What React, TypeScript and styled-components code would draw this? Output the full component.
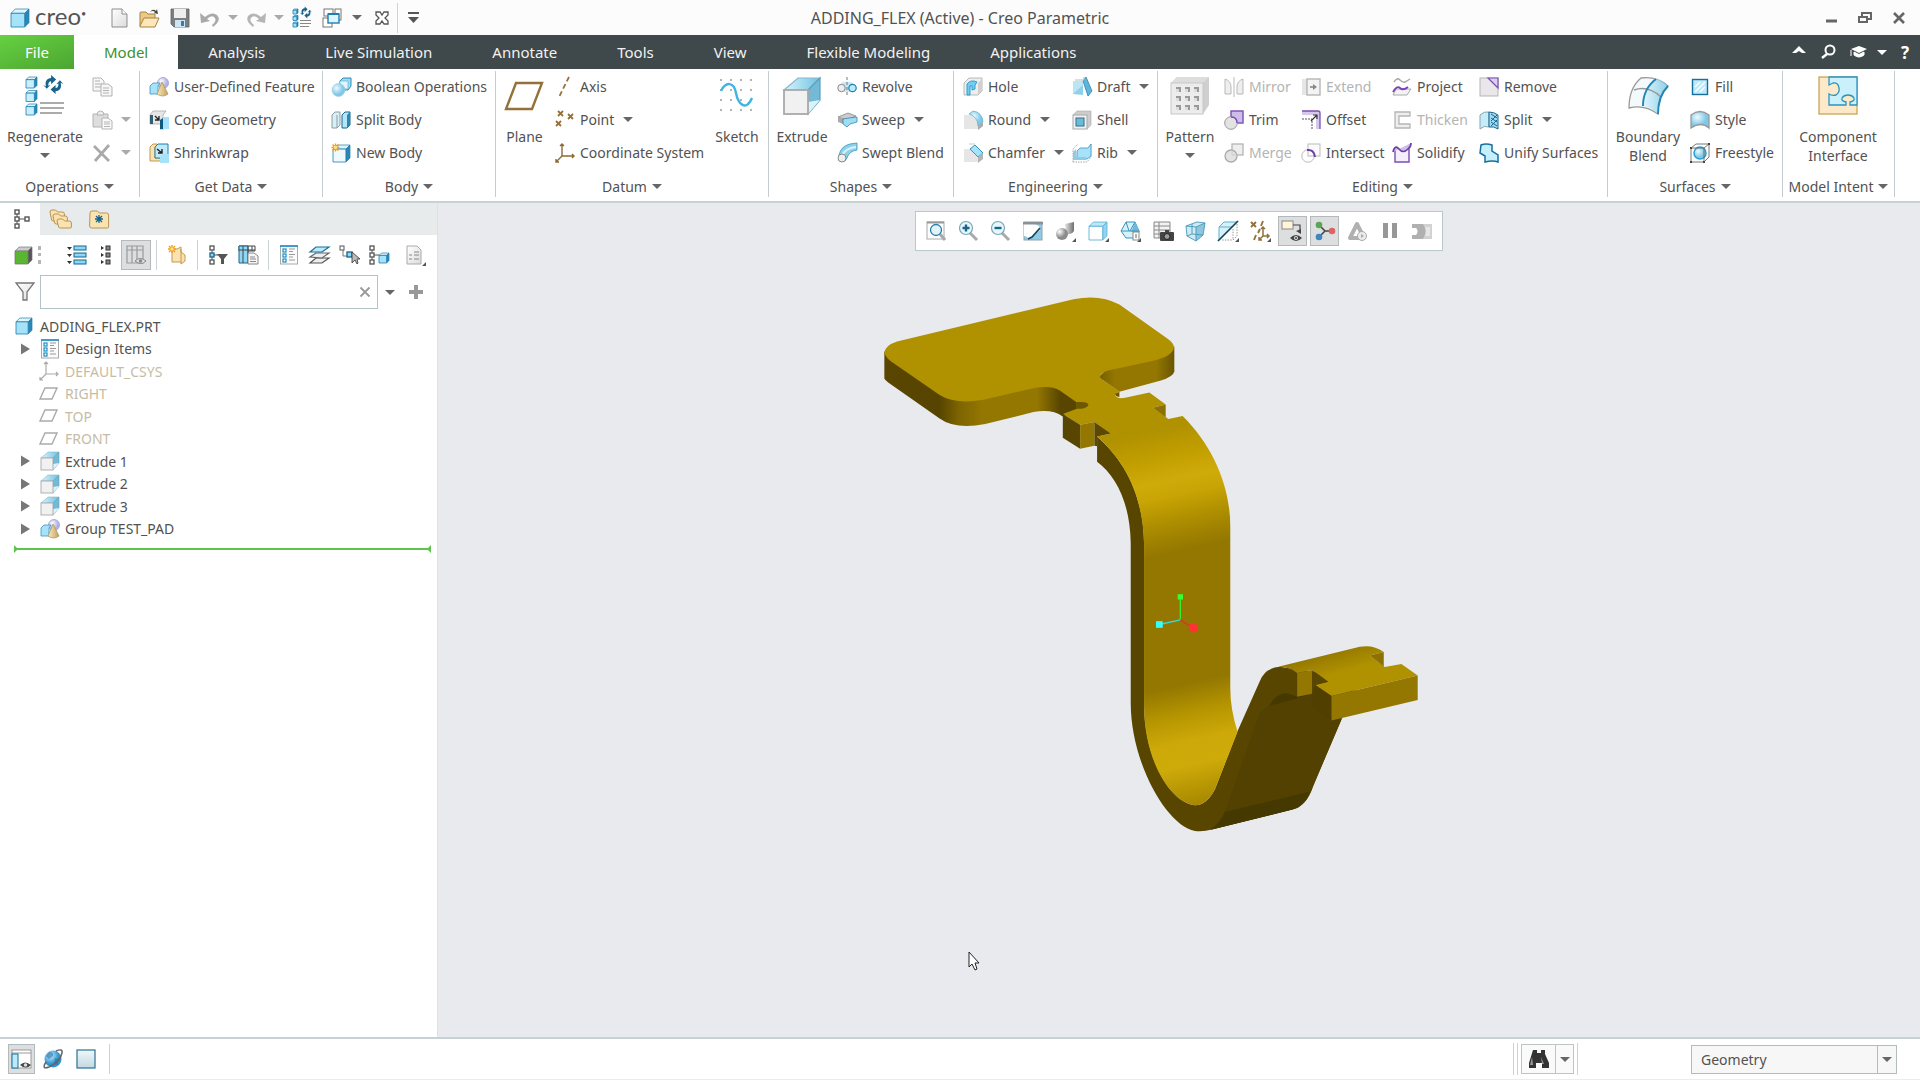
import React, { ReactNode } from 'react';
import styled, { createGlobalStyle, css } from 'styled-components';

const color = {
  text: '#525252',
  muted: '#b4b4b4',
  line: '#c6d2d5',
  dark: '#3f484a',
  strip: '#e8ebec',
  canvas: '#e8eaee',
  blue: '#1c7fae',
  sky: '#a6e3fb',
};

const GlobalStyle = createGlobalStyle`
  * { box-sizing: border-box; }
  body { margin: 0; background: #fff; }
  body, button, input, select {
    font-family: 'Noto Sans', 'Open Sans', sans-serif;
    font-size: 14px;
    color: ${color.text};
  }
  button { border: 0; padding: 0; background: none; }
`;

/* ---------- drawings ---------- */

const Cube = ({ x, y, s, f = '#a6e3fb', side = '#2b87b3', top = '#dff5fd', e = '#1c7fae' }: {
  x: number; y: number; s: number; f?: string; side?: string; top?: string; e?: string;
}) => {
  const d = s * 0.24;
  return (
    <g strokeLinejoin="round">
      <path d={`M${x} ${y + d}l${d} ${-d}h${s - d}l${-d} ${d}z`} fill={top} stroke={e} strokeWidth=".7" />
      <path d={`M${x + s - d} ${y + d}l${d} ${-d}v${s - d}l${-d} ${d}z`} fill={side} stroke={e} strokeWidth=".7" />
      <rect x={x} y={y + d} width={s - d} height={s - d} fill={f} stroke={e} strokeWidth=".8" />
    </g>
  );
};

const Refresh = ({ t }: { t: string }) => (
  <g transform={t} fill="#17658d">
    <path d="M3 15C1 9 4 4 10 4V0l7 6-7 6V8q-4 0-4 6l3-1-5 5-5-5z" transform="translate(1 -1) scale(.8)" />
    <path d="M3 15C1 9 4 4 10 4V0l7 6-7 6V8q-4 0-4 6l3-1-5 5-5-5z" transform="translate(22 19) rotate(180) scale(.8)" />
  </g>
);

const Spark = ({ x, y }: { x: number; y: number }) => (
  <g transform={`translate(${x} ${y})`}>
    <path d="M0-4V4M-4 0H4M-3-3l6 6M3-3l-6 6" stroke="#f39a1d" strokeWidth="1.4" />
    <circle r="1.7" fill="#ffe07a" />
  </g>
);

const Corner = () => <path d="M21 17v4h-4z" fill="#555" />;

const UdfArt = () => (
  <>
    <circle cx="14" cy="6" r="5.5" fill="url(#lilac)" stroke="#9c9cd6" strokeWidth=".8" />
    <path d="M1 9l3-3h7l-2 3v8H1z" fill="#a6e3fb" stroke="#3a95bd" strokeWidth=".8" />
    <path d="M13 5l6 12q-5 4-11 0z" fill="url(#tan)" stroke="#a98f55" strokeWidth=".7" />
  </>
);

const ExtrudeArt = () => (
  <>
    <path d="M1 7l7-6h11l-6 6z" fill="url(#skyTop)" stroke="#8ab7c9" strokeWidth=".6" />
    <path d="M13 7l6-6v11l-6 7z" fill="#74b9d6" stroke="#5a9fbd" strokeWidth=".6" />
    <path d="M13 19l6-7-6 1z" fill="#d8f3fc" />
    <rect x="1" y="7" width="12" height="12" fill="#f1f1f1" stroke="#a9a9a9" strokeWidth=".9" />
  </>
);

const DesignArt = () => (
  <>
    <rect x="1.5" y="1" width="17" height="18" fill="#fbfbfb" stroke="#aaa" />
    <path d="M1 1h18" stroke="#1c8fc4" strokeWidth="1.6" />
    <g fill="#fff" stroke="#1c8fc4" strokeWidth="1.2">
      <rect x="4" y="4" width="3" height="3" /><rect x="4" y="9" width="3" height="3" /><rect x="4" y="14" width="3" height="3" />
    </g>
    <path d="M10 4h6M10 6.500h4M10 9.500h6M10 12h4M10 15h6" stroke="#999" />
  </>
);

const FolderArt = ({ x, y, w, h }: { x: number; y: number; w: number; h: number }) => (
  <path d={`M${x} ${y + 2}q0-2 2-2h${w * 0.3}l2 2h${w * 0.4}q2 0 2 2v${h - 4}q0 1-1 1h${-(w - 2)}q-2 0-2-2z`} fill="#fbe3b1" stroke="#b18a48" strokeWidth=".9" />
);

const art: Record<string, ReactNode> = {
  logo: <Cube x={1} y={1} s={18} />,
  fresh: <><path d="M2 1h10l5 5v13H2z" fill="url(#paper)" stroke="#8d8d8d" /><path d="M12 1v5h5" fill="#fff" stroke="#8d8d8d" /></>,
  open: (
    <>
      <path d="M0 18V5q0-1 1-1h5l2 2h7v4" fill="#e9c888" stroke="#a5833f" />
      <path d="M0 18l4-8h15l-4 9H0z" fill="#fde7b8" stroke="#a5833f" />
      <path d="M10 4q3-4 6-1l1-2 1 5-4-1 1-1q-2-2-5 0z" fill="#444" />
    </>
  ),
  save: (
    <>
      <path d="M1 1h18v18H4l-3-3z" fill="#7b7f81" stroke="#5e6163" strokeWidth=".8" />
      <rect x="4" y="1" width="12" height="9" fill="#eee" /><rect x="5" y="12" width="10" height="7" fill="#cfe6f2" /><rect x="11" y="13" width="3" height="5" fill="#367fa6" />
    </>
  ),
  undo: <path d="M0 5l1 10 9-2-3-2q4-4 7-2 4 3-2 8l1 2q9-7 4-12-5-4-12 2z" fill="#a9a9a9" />,
  redo: <path d="M20 5l-1 10-9-2 3-2q-4-4-7-2-4 3 2 8l-1 2q-9-7-4-12 5-4 12 2z" fill="#b5b5b5" />,
  regenList: (
    <>
      <Cube x={1} y={1} s={5} /><Cube x={1} y={7.5} s={5} /><Cube x={1} y={14} s={5} />
      <Refresh t="translate(8 -1) scale(.52 .6)" />
      <path d="M8 12.500h11M8 15.500h11M8 18.500h9" stroke="#888" strokeWidth="1.2" />
    </>
  ),
  windows: (
    <>
      <rect x="2" y="1" width="9" height="7" fill="#fff" stroke="#777" /><rect x="13" y="1" width="6" height="11" fill="#fff" stroke="#777" />
      <rect x="1" y="10" width="9" height="9" fill="#fff" stroke="#777" />
      <rect x="6" y="6" width="11" height="9" fill="#ddf5fe" stroke={color.blue} strokeWidth="1.4" />
      <path d="M6 6h11" stroke={color.blue} strokeWidth="2" />
    </>
  ),
  closeWin: <path d="M4 4h4l2 3 2-3h4v3l-3 3 3 3v3h-4l-2-3-2 3H4v-3l3-3-3-3z" fill="#fff" stroke="#555" strokeWidth="1.3" />,
  overflow: <><path d="M5 5h11" stroke="#555" strokeWidth="2" /><path d="M5 9h11l-5.500 6z" fill="#555" /></>,
  min: <path d="M5 13h11" stroke="#666" strokeWidth="3" />,
  restore: <><path d="M7 8V5h9v6h-3" fill="none" stroke="#666" strokeWidth="2" /><rect x="4" y="9" width="8" height="5" fill="none" stroke="#666" strokeWidth="2" /></>,
  close: <path d="M5 5l10 10M15 5L5 15" stroke="#666" strokeWidth="2.600" />,
  collapse: <path d="M10 4l7 7h-4l-3-2-3 2H3z" fill="#fff" />,
  search: <><circle cx="11" cy="8" r="4.500" fill="none" stroke="#fff" strokeWidth="2" /><path d="M8 12l-5 4" stroke="#fff" strokeWidth="2.500" /></>,
  grad: <><path d="M10 4l8 3-8 4-8-4z" fill="#fff" /><path d="M5 10l5 2.500 5-2.500v3q-5 4-10 0zM2 8v6" fill="#fff" stroke="#fff" /></>,

  regenerate: (
    <>
      <Cube x={1} y={1} s={11} f="#c9effc" /><Cube x={1} y={14.5} s={11} f="#c9effc" /><Cube x={1} y={28} s={11} f="#c9effc" />
      <Refresh t="translate(18 0) scale(.9 .95)" />
      <path d="M15 27h24M15 32h24M15 37h22" stroke="#909090" strokeWidth="1.700" />
    </>
  ),
  copy: (
    <g fill="#f6f6f6" stroke="#b3b3b3">
      <path d="M1 1h8l3 3v10H1z" /><path d="M3 4h5M3 7h7M3 10h7" /><path d="M9 7h7l4 3v9H9z" /><path d="M11 11h6M11 13.500h6M11 16h6" />
    </g>
  ),
  paste: (
    <g stroke="#b3b3b3">
      <path d="M1 4h15v13H1z" fill="#ddd" /><path d="M5 5q0-4 3.500-4T12 5z" fill="#eee" />
      <path d="M10 8h6l4 3v8H10z" fill="#fafafa" /><path d="M12 12h6M12 14h6M12 16.500h6" />
    </g>
  ),
  del: <path d="M2 3l15 15M17 2L3 18" stroke="#a9a9a9" strokeWidth="2.800" />,
  udf: <UdfArt />,
  copyGeom: (
    <>
      <path d="M1 5l3-4h13l-3 4v9H1z" fill="#e6e6e6" stroke="#aaa" strokeWidth=".8" /><path d="M1 5h3v9H1z" fill="#2d5f78" />
      <path d="M6 6l4 4M10 6v4H6" stroke="#222" strokeWidth="1.300" fill="none" />
      <path d="M11 10l4-3h5v12h-5v1h-4z" fill={color.sky} /><path d="M11 10l3-2v11h-3z" fill="#11587f" />
    </>
  ),
  shrink: (
    <>
      <path d="M1 4l3-3h4v3H6v11h8v3H1z" fill="#fbe3b1" stroke="#c19a50" />
      <path d="M6 4l3-3h10v10l-3 4H6z" fill="#bfe9f9" stroke={color.blue} /><path d="M8 6l5 4M13 6v4H9" stroke="#222" strokeWidth="1.400" fill="none" />
      <path d="M11 14l3-3h6v9h-9z" fill={color.sky} />
    </>
  ),
  boolOp: (
    <>
      <path d="M9 4l3-3h8v8l-3 4H9z" fill="#9fdcf3" stroke={color.blue} strokeWidth=".9" /><rect x="9" y="4" width="8" height="8" fill="#e2f6fd" stroke="#5fb1d0" strokeWidth=".7" />
      <circle cx="7.500" cy="13" r="6.500" fill="url(#ball)" stroke="#9cc9dc" strokeWidth=".6" />
    </>
  ),
  splitBody: (
    <>
      <path d="M1 5l3-3h5v13l-3 3H1z" fill="#d7eff7" stroke="#8d9da3" /><path d="M6 5v13" stroke="#8d9da3" />
      <path d="M11 5l3-3h5v13l-3 3h-5z" fill="#b5e6f8" stroke="#17658d" /><path d="M16 5v13l3-3V2z" fill="#2b87b3" />
    </>
  ),
  newBody: <><Cube x={2} y={2} s={17} f="#f0fafd" /><Spark x={4.5} y={4.5} /></>,
  plane: <path d="M11 7h26L27 33H1z" fill="none" stroke="#94703a" strokeWidth="2.400" />,
  axis: <path d="M14 0L4 20" stroke="#94703a" strokeWidth="1.800" strokeDasharray="5 3" fill="none" />,
  point: <path d="M3 1l5 5M8 1L3 6M13 4l5 5M18 4l-5 5M1 11l5 5M6 11l-5 5" stroke="#94703a" strokeWidth="1.800" />,
  csys: <path d="M7 1v12h12M7 13l-6 6M5 3l2-2 2 2M17 11l2 2-2 2M1 16v3h3" fill="none" stroke="#8a6a35" strokeWidth="1.400" />,
  sketch: (
    <>
      <g fill="#555">{[4, 14, 24, 34].map((x) => [4, 14, 24, 34].map((y) => <circle key={`${x}-${y}`} cx={x} cy={y} r=".8" />))}</g>
      <path d="M4 15C9 5 17 6 19 17S29 36 35 22" fill="none" stroke="#41b3e4" strokeWidth="2.400" />
    </>
  ),
  extrude: <g transform="scale(2)"><ExtrudeArt /></g>,
  extrudeSmall: <ExtrudeArt />,
  revolve: (
    <>
      <path d="M4 6q6-3 12 0v8q-6 2-12 0z" fill="#c4eaf8" /><circle cx="4.500" cy="11" r="3.700" fill="#eee" stroke="#888" /><circle cx="15.500" cy="11" r="3.700" fill="#bdeafa" stroke={color.blue} strokeWidth="1.200" />
      <path d="M10 0v20" stroke="#777" strokeDasharray="3 2" />
    </>
  ),
  sweep: <><path d="M1 7l10-4 8 3-9 4z" fill="#ccc" stroke="#888" strokeWidth=".8" /><path d="M1 7v5l5 2v-5z" fill="#aaa" /><path d="M6 9l6-1 8-1v5l-7 2-3 3-4-3z" fill="#9fdcf3" stroke={color.blue} strokeWidth=".7" /></>,
  swept: <><path d="M2 12Q4 3 13 1l7-1v7q-8 1-10 8l-2 3z" fill="#8fd0ea" stroke="#3a95bd" strokeWidth=".8" /><path d="M5 13Q8 5 19 4" stroke="#d9f3fc" strokeWidth="2" fill="none" /><circle cx="5" cy="15" r="4" fill="#eee" stroke="#888" /></>,
  hole: <><path d="M1 6l5-5h13v13l-4 4H1z" fill="#eee" stroke="#aaa" strokeWidth=".8" /><path d="M15 6v12l4-4V2z" fill="#d0d0d0" /><path d="M4 18V7q4-5 10-2l-2 3v4l-3 1V9H7v9z" fill="#74cdf1" stroke="#2496c8" strokeWidth=".9" /></>,
  round: <><path d="M1 5h5q9 2 9 9v5H1z" fill="#e6e6e6" /><path d="M6 4l4-3q9 1 10 11l-5 4q0-9-9-12z" fill="url(#ball)" stroke="#5fb1d0" strokeWidth=".8" /><path d="M15 16l5-4v4l-5 4z" fill="#aaa" /></>,
  chamfer: <><path d="M1 6h6l8 8v5H1z" fill="#e6e6e6" /><path d="M7 6l5-4 8 8-5 4z" fill="#a6e3fb" stroke="#3a95bd" /><path d="M15 14l5-4v6l-5 4z" fill="#b5b5b5" /><path d="M6 1h6" stroke="#ccc" /></>,
  draft: <><path d="M1 4h10v13H1z" fill="#b8e6f6" /><path d="M11 4l3-4 6 14-4 5z" fill="#5fb5d9" stroke="#2b87b3" strokeWidth=".8" /><path d="M1 17L11 8v10z" fill="#8fd0ea" /><path d="M3 3h9V0" stroke="#bbb" fill="none" /></>,
  shell: <><path d="M1 5l4-4h14v14l-4 4z" fill="#ccc" stroke="#aaa" strokeWidth=".6" /><rect x="1" y="5" width="14" height="14" fill="#f0f0f0" stroke="#aaa" /><rect x="4" y="8" width="8" height="8" fill="#6fb9d4" stroke="#2b7291" /></>,
  rib: <><path d="M1 19V6l5-5M1 19h14l4-5V1" fill="none" stroke="#aaa" strokeDasharray="1.500 1" /><path d="M5 8l3-3h8l3-4v12l-4 3H5z" fill="#a6e3fb" stroke="#3a95bd" strokeWidth=".8" /><path d="M1 9l3-3v8h10v3H1z" fill="#8fcbe4" /></>,
  pattern: (
    <>
      <path d="M1 7l6-6h32v28l-6 9z" fill="#cfcfcf" /><path d="M1 7l6-6h32l-6 6z" fill="#ddd" />
      <rect x="1" y="7" width="32" height="31" fill="#ececec" stroke="#c8c8c8" />
      {[6, 15, 24].map((x) => [12, 21, 30].map((y) => <g key={`${x}${y}`}><rect x={x} y={y - 1} width="5" height="5" fill="#999" /><rect x={x} y={y + 1} width="3" height="3" fill="#ddd" /></g>))}
    </>
  ),
  mirror: <g fill="#eee" stroke="#b9b9b9"><path d="M1 2q6 2 6 8v7H1zM19 2q-6 2-6 8v7h6z" /><path d="M10 0v20" /></g>,
  extend: <><path d="M1 2h6v16H1z" fill="#e6e6e6" /><rect x="6" y="2" width="13" height="16" fill="#f3f3f3" stroke="#b5b5b5" strokeWidth="1.400" /><path d="M9 10h4" stroke="#888" strokeWidth="1.600" /><path d="M12 7l4 3-4 3z" fill="#888" /></>,
  project: <><path d="M2 5q3-5 6-2t5 2 5-3" fill="none" stroke="#aaa" strokeWidth="1.500" /><path d="M4 12h15l-4 6H1z" fill="#f3f3f3" stroke="#aaa" /><path d="M1 15q4-7 7-4t8-1" fill="none" stroke="#7a3fc4" strokeWidth="1.800" /></>,
  remove: <><rect x="1" y="1" width="18" height="18" fill="#e9e7ea" stroke="#b5b5b5" /><path d="M9 1h10v10z" fill="#d9cdf0" stroke="#7a4fb0" strokeWidth="1.200" /></>,
  trim: <><rect x="7" y="1" width="12" height="12" fill="#cdbdea" stroke="#7a4fb0" strokeWidth="1.400" /><circle cx="7" cy="13" r="6.300" fill="#e3e3e3" stroke="#999" /><path d="M7 7q6 0 6 6" fill="none" stroke="#7a4fb0" strokeWidth="1.400" /></>,
  offset: <><path d="M1 1h18v18h-4V5H1z" fill="#d5c8ec" /><path d="M1 1h16q2 0 2 2v16" fill="none" stroke="#7a4fb0" strokeWidth="1.300" /><path d="M1 9h10v10" fill="none" stroke="#555" strokeDasharray="2 1" /><path d="M10 11l6-6M12 5h4v4" fill="none" stroke="#333" strokeWidth="1.200" /></>,
  thicken: <path d="M18 2H3v16h15v-4H7V6h11z" fill="#eee" stroke="#b5b5b5" strokeWidth="1.300" />,
  split: <><path d="M1 5q4-4 9-3v15q-5-2-9 2z" fill="#c5edf9" stroke="#8aa5ae" /><path d="M10 2q5 0 9 3v14q-4-3-9-2z" fill="#9fdcf3" stroke="#17658d" /><path d="M12 4l6 4M12 8l6 4M12 12l6 4M18 5l-6 6M18 10l-6 6" stroke="#17658d" /></>,
  merge: <><rect x="8" y="1" width="11" height="11" fill="#eee" stroke="#b5b5b5" strokeWidth="1.300" /><circle cx="7" cy="13" r="6" fill="#e3e3e3" stroke="#aaa" strokeWidth="1.300" /><path d="M8 7v5h5" fill="none" stroke="#ccc" /></>,
  intersect: <><rect x="7" y="1" width="12" height="12" fill="#fbfbfb" stroke="#bbb" /><circle cx="7" cy="13" r="6.200" fill="none" stroke="#bbb" /><path d="M6 7q7-1 8 7" fill="none" stroke="#6b3fa5" strokeWidth="2" /></>,
  solidify: <><path d="M3 6v13h14V6" fill="#f4effa" stroke="#7a4fb0" strokeWidth="1.400" /><path d="M1 9q2-8 6-3t9 0q3-2 3-6" fill="#cdbdea" stroke="#6b3fa5" strokeWidth="1.700" /></>,
  unify: <path d="M2 2q5-2 11 0v6l6 4v7q-5-2-13 0v-6l-5-3z" fill="#c5effc" stroke="#17709c" strokeWidth="1.500" />,
  boundary: (
    <>
      <path d="M1 32Q1 12 13 2q16-2 27 8-10 10-10 28Q16 28 1 32z" fill="#f4fafc" stroke="#999" strokeWidth="1.300" />
      <path d="M15 30Q16 11 27 2q8 2 13 8-10 10-10 28-6-6-15-8z" fill="url(#skyTop)" opacity=".75" />
      <path d="M6 14q14-5 27 7" fill="none" stroke="#999" strokeWidth="1.500" />
      <path d="M15 30Q15 13 28 3M30 38q0-18 10-28" fill="none" stroke="#1f86b5" strokeWidth="1.900" />
    </>
  ),
  fill: <><rect x="2.500" y="2.500" width="15" height="15" fill="#bdeafa" stroke="#17709c" strokeWidth="1.400" /><path d="M5 10l5-5M5 15L15 5M10 15l5-5" stroke="#fff" strokeWidth="1.200" /></>,
  style: <path d="M1 18V5q9-7 18 0v13q-8-7-18 0z" fill="url(#ball)" stroke="#999" strokeWidth="1.300" />,
  freestyle: <><circle cx="10" cy="10" r="6" fill="url(#ball)" stroke="#2b9fd0" strokeWidth="1.500" /><path d="M1 5l5-4h13v13l-5 5H1zM1 5h13v14M14 5l5-4" fill="none" stroke="#666" strokeWidth=".9" /><path d="M0 4h2v2H0zM18 0h2v2h-2zM0 18h2v2H0zM13 18h2v2h-2z" fill="#444" /></>,
  component: (
    <>
      <rect x="1" y="1" width="38" height="37" fill="#fde9c8" stroke="#c79d4c" strokeWidth="1.200" />
      <path d="M11 1h28v28h-7v-3q5-1 4-4-2-3-6-3t-6 3q-1 3 4 4v3H11V18q3 2 7 1 4-3 3-7-1-6-6-5-2 1-4 2z" fill="#c9f0fb" stroke="#2b93c0" strokeWidth="1.300" />
    </>
  ),

  treeTab: <><path d="M5 3v14M5 10h10" stroke="#555" /><g fill="#fff" stroke="#555" strokeWidth="1.400"><rect x="3" y="1" width="4" height="4" /><rect x="3" y="8" width="4" height="4" /><rect x="3" y="15" width="4" height="4" /><rect x="13" y="8" width="4" height="4" /></g></>,
  folders: <><FolderArt x={1} y={1} w={12} h={10} /><FolderArt x={4} y={5} w={12} h={9} /><FolderArt x={8} y={10} w={12} h={8} /></>,
  favorites: <><FolderArt x={1} y={2} w={18} h={16} /><path d="M10 6v8M6 10h8M7 7l6 6M13 7l-6 6" stroke="#17658d" strokeWidth="1.300" /></>,
  green: <Cube x={2} y={2} s={17} f="#5ab531" side="#555" top="#ccc" e="#777" />,
  expand: <><g fill="#8ed8f5" stroke="#17658d"><rect x="7" y="1" width="12" height="4" /><rect x="7" y="8" width="12" height="4" /><rect x="7" y="15" width="12" height="4" /></g><path d="M0 2h5l-2.500 3zM0 9h5l-2.500 3zM0 16h5l-2.500 3z" fill="#333" /></>,
  collapseAll: <><g fill="#888" stroke="#333"><rect x="9" y="1" width="4" height="4" /><rect x="9" y="8" width="4" height="4" /><rect x="9" y="15" width="4" height="4" /></g><path d="M4 1l3 2-3 2zM4 8l3 2-3 2zM4 15l3 2-3 2z" fill="#333" /></>,
  columns: <><path d="M1 1h16v17H1zM1 5h16M6 1v17M11 1v17" fill="none" stroke="#999" strokeWidth="1.200" /><path d="M9 16q5-5 11 0-5 5-11 0z" fill="#e3e3e3" stroke="#888" /><circle cx="14.500" cy="16" r="1.800" fill="#888" /></>,
  newFolder: <><path d="M5 4h5l4-2v5l4 3v6l-4 3v-2H5z" fill="#fbe3b1" stroke="#c19a50" /><path d="M14 4v13" stroke="#c19a50" fill="none" /><Spark x={5} y={4} /></>,
  treeFilter: <><path d="M4 3v14M4 10h6" stroke="#555" /><g fill="#fff" stroke="#555" strokeWidth="1.300"><rect x="2" y="1" width="4" height="4" /><rect x="2" y="8" width="4" height="4" fill="#8ed8f5" stroke="#17658d" /><rect x="2" y="15" width="4" height="4" /></g><path d="M9 9h11l-4 5v5h-3v-5z" fill="#555" /></>,
  treeCols: <><path d="M1 1h16v5H1z" fill="#fff" stroke="#444" /><path d="M1 1h9v17H1z" fill="#8ed8f5" stroke="#17658d" /><path d="M1 5h16M5 1v17M10 1v17M14 1v5" stroke="#444" /><path d="M10 8h6l4 3v8H10z" fill="#f6f6f6" stroke="#888" /><path d="M12 12h5M12 14h6M12 16.500h6" stroke="#888" /></>,
  design: <DesignArt />,
  layers: <g strokeWidth="1.200"><path d="M1 18l6-5h13l-7 5z" fill="#eee" stroke="#555" /><path d="M1 12l6-4h13l-7 5z" fill="#eee" stroke="#666" /><path d="M1 7l6-5h13l-7 5z" fill="#bdeafa" stroke="#17709c" /></g>,
  select: <><path d="M4 3v8h6" stroke="#777" fill="none" /><rect x="1" y="1" width="4" height="4" fill="#fff" stroke="#555" /><rect x="8" y="7" width="5" height="5" fill="#8ed8f5" stroke="#17658d" strokeWidth="1.300" /><path d="M13 7v11l3-3 2 4 1-1-1-4h3z" fill="#bbb" stroke="#333" strokeWidth=".8" /></>,
  treeBody: <><path d="M3 3v14M3 10h7" stroke="#555" /><g fill="#fff" stroke="#555" strokeWidth="1.300"><rect x="1" y="1" width="4" height="4" /><rect x="1" y="8" width="4" height="4" /><rect x="1" y="15" width="4" height="4" /></g><Cube x={10} y={8} s={10} /></>,
  report: <><path d="M2 1h10l4 4v14H2z" fill="url(#paper)" stroke="#aaa" /><path d="M4 10h3M4 14h3M9 10h5M9 14h5M9 7h5" stroke="#888" strokeWidth="1.200" /><Corner /></>,
  funnel: <path d="M1 1h18l-7 9v8H8v-8z" fill="url(#paper)" stroke="#777" strokeWidth="1.300" />,
  plus: <path d="M10 3v14M3 10h14" stroke="#999" strokeWidth="4" />,
  cross: <path d="M5.500 5.500l9 9M14.500 5.500l-9 9" stroke="#999" strokeWidth="1.800" />,
  part: <Cube x={1} y={2} s={16} />,
  csysGrey: <path d="M6 1v12h12M6 13l-6 6M4 3l2-2 2 2M16 11l2 2-2 2M0 16v3h3" fill="none" stroke="#aaa" strokeWidth="1.200" />,
  planeGrey: <path d="M5 4h12l-5 11H0z" fill="none" stroke="#aaa" strokeWidth="1.400" />,
  arrow: <path d="M6 4.500l9 5.500-9 5.500z" fill="#777" />,

  zoomFit: <><rect x="1" y="1" width="17" height="17" fill="#fff" stroke="#aaa" /><path d="M1 1.500h17" stroke="#999" strokeWidth="2" /><path d="M14 13l5 6" stroke="#aaa" strokeWidth="3" /><circle cx="10" cy="9" r="5.500" fill="#dff4fc" stroke="#2b7fa5" strokeWidth="1.300" /></>,
  zoomIn: <><path d="M12 12l7 7" stroke="#aaa" strokeWidth="3" /><circle cx="8" cy="7" r="6.500" fill="#e8f7fc" stroke="#7aa5b5" strokeWidth="1.200" /><path d="M8 3.500v7M4.500 7h7" stroke="#17658d" strokeWidth="2.400" /></>,
  zoomOut: <><path d="M12 12l7 7" stroke="#aaa" strokeWidth="3" /><circle cx="8" cy="7" r="6.500" fill="#e8f7fc" stroke="#7aa5b5" strokeWidth="1.200" /><path d="M4.500 7h7" stroke="#17658d" strokeWidth="2.400" /></>,
  repaint: <><rect x="1" y="1" width="18" height="18" fill="#8fcbe2" stroke="#8fa5ad" /><path d="M1 3h11q6 2 5 6L6 18q-2-3-5-3z" fill="#fff" /><path d="M0 1h20v2.500H0z" fill="#8a9295" /><path d="M17 7l-8 9-4 2" stroke="#17455c" strokeWidth="1.700" fill="none" /></>,
  shading: <><path d="M10 3l9-2v9q-3 4-8 3z" fill="url(#darkGrey)" /><circle cx="7" cy="13" r="6" fill="url(#grey)" /><Corner /></>,
  saved: <><Cube x={1} y={1} s={18} f="#fcfeff" side="#8fd6f2" top="#b9e9f8" e="#4fa8cc" /><Corner /></>,
  orient: <><path d="M6 1h9l4 9-4 7H6L1 10z" fill="#d5f2fb" stroke="#3a95bd" /><path d="M15 1l5 10H11z" fill="#6fb9d9" /><path d="M1 10h18M6 1l3 9M15 1l-5 9" stroke="#3a95bd" /><rect x="13" y="11" width="6" height="8" fill="#fff" stroke="#888" /><path d="M15 14h2M15 16h2" stroke="#666" /><Corner /></>,
  viewMgr: <><path d="M1 1h16v16H1zM6 1v16M1 5h16M1 9h16M1 13h16" fill="#f3f3f3" stroke="#888" /><rect x="7" y="11" width="14" height="9" rx="1" fill="#444" /><path d="M12 9h4v2h-4z" fill="#444" /><circle cx="14" cy="15.500" r="3" fill="#999" stroke="#222" /></>,
  perspective: <><path d="M1 5l11-4 8 1-2 12-7 6-9-5z" fill="#cdeaf5" /><path d="M11 6l9-4-2 12-7 6z" fill="#8cc7df" /><path d="M1 5l11-4 8 1-9 4zM11 6v14l-9-5-1-10M11 20l7-6 2-12M7 3v10l11 1M7 13l-5 2" fill="none" stroke="#4697b8" strokeWidth=".9" /></>,
  section: <><path d="M1 6l5-5h13L1 19z" fill="#d5f2fb" stroke="#5cb2d4" /><path d="M1 6h13" stroke="#5cb2d4" /><path d="M19 3v12l-4 4H3M15 8v11" fill="none" stroke="#999" strokeDasharray="1.500 1.200" /><path d="M0 20L20 0" stroke="#17455c" strokeWidth="1.700" /><Corner /></>,
  datum: <><path d="M1 1l5 5M6 1L1 6M13 0l-2 5M10 8l-2 4M6 14l-2 5" stroke="#94703a" strokeWidth="1.900" /><path d="M13 6v9h6M13 15l-4 4M11 8l2-2 2 2M17 13l2 2-2 2M9 16v3h3" fill="none" stroke="#94703a" strokeWidth="1.500" /><Corner /></>,
  annot: <><rect x="0" y="0" width="11" height="8" fill="#fff6d8" stroke="#888" /><path d="M11 4h7v6" fill="none" stroke="#444" strokeWidth="1.200" /><path d="M14 10l5 3V8z" fill="#444" /><path d="M8 17q6-6 12 0-6 6-12 0z" fill="#444" /><circle cx="14" cy="17" r="2" fill="#ddd" /><circle cx="14" cy="17" r="1" fill="#444" /></>,
  spin: <><path d="M4 4l6 6-6 6M10 10h7" fill="none" stroke="#444" strokeWidth="1.500" /><circle cx="4" cy="4" r="3.300" fill="#5aa653" /><circle cx="17" cy="10" r="3.300" fill="#dd6464" /><circle cx="4" cy="16" r="3.300" fill="#3f86c0" /></>,
  analysis: <><path d="M10 3l7 14H3z" fill="none" stroke="#b0b0b0" strokeWidth="4" strokeLinejoin="round" /><circle cx="15" cy="15" r="4.500" fill="#ececec" stroke="#aaa" /><path d="M14 13l3 2-3 2z" fill="#aaa" /></>,
  pause: <path d="M3 2h5v15H3zM12 2h5v15h-5z" fill="#979797" />,
  stop: <><path d="M0 3h20v15H0z" fill="#d2d2d2" /><path d="M0 3h11q5 7 0 15H0v-4h4q3-3 0-7H0z" fill="#b0b0b0" /><path d="M13 6h5v9h-5q2-4 0-9z" fill="#e6e6e6" /><path d="M0 7h4q3 3 0 7H0z" fill="#fff" /></>,

  navPanel: <><rect x="0" y="1" width="19" height="18" fill="#fff" stroke="#999" /><path d="M0 4h19" stroke="#999" /><rect x="0" y="5" width="6" height="14" fill="#bdeafa" stroke="#17709c" /><path d="M8 16q5-5 11 0-5 5-11 0z" fill="#444" /><circle cx="13.500" cy="16" r="1.800" fill="#ddd" /></>,
  globe: <><circle cx="10" cy="10" r="8.500" fill="url(#globeFill)" /><path d="M6 3q5 0 4 4l-4 3-3-3zM12 9l4 1-2 6-3-2z" fill="#2a6f9c" opacity=".6" /><path d="M3 13q-5 8 3 5 11-5 13-14 1-5-6-2" fill="none" stroke="#666" strokeWidth="1.500" /></>,
  page: <rect x="1" y="1" width="18" height="18" fill="url(#sheet)" stroke="#2b7291" strokeWidth="1.200" />,
  find: <><path d="M4 1h4v3h4V1h4v4l4 9v5h-7v-5H7v5H0v-5z" fill="#333" /><path d="M3 8l-2 8h3zM12 8l1 7h2z" fill="#999" /></>,
};

const Svg = styled.svg`
  display: block;
  flex: none;
  overflow: visible;
`;

const Icon = ({ name, size = 20 }: { name: string; size?: number }) => (
  <Svg width={size} height={size} viewBox={`0 0 ${size} ${size}`} aria-hidden="true">{art[name]}</Svg>
);

const Defs = styled.svg`
  position: absolute;
  width: 0;
  height: 0;
`;

const Gradients = () => (
  <Defs aria-hidden="true">
    <defs>
      <radialGradient id="lilac" cx=".35" cy=".35"><stop stopColor="#fff" /><stop offset="1" stopColor="#b3b3e6" /></radialGradient>
      <radialGradient id="ball" cx=".35" cy=".35"><stop stopColor="#eefaff" /><stop offset="1" stopColor="#7fc8e6" /></radialGradient>
      <radialGradient id="grey" cx=".3" cy=".3"><stop stopColor="#fff" /><stop offset="1" stopColor="#8c8c8c" /></radialGradient>
      <radialGradient id="globeFill" cx=".35" cy=".3"><stop stopColor="#c4ecff" /><stop offset="1" stopColor="#2b93cf" /></radialGradient>
      <linearGradient id="darkGrey"><stop stopColor="#e6e6e6" /><stop offset="1" stopColor="#6d6d6d" /></linearGradient>
      <linearGradient id="tan"><stop stopColor="#fbeac0" /><stop offset="1" stopColor="#c2a25c" /></linearGradient>
      <linearGradient id="paper" x2="1" y2="1"><stop stopColor="#fff" /><stop offset="1" stopColor="#dcdcdc" /></linearGradient>
      <linearGradient id="sheet" x2="0" y2="1"><stop stopColor="#eef8fc" /><stop offset="1" stopColor="#c3d8e2" /></linearGradient>
      <linearGradient id="skyTop" x2="1"><stop stopColor="#d9f5fd" /><stop offset="1" stopColor="#6fc1e0" /></linearGradient>
    </defs>
  </Defs>
);

/* ---------- shared parts ---------- */

const Caret = styled.span<{ $color?: string }>`
  flex: none;
  border: 5px solid transparent;
  border-top-color: ${(p) => p.$color || '#666'};
  border-bottom: 0;
`;

const IconButton = styled.button<{ $w?: number; $pressed?: boolean }>`
  display: flex;
  flex: none;
  align-items: center;
  justify-content: center;
  width: ${(p) => p.$w || 30}px;
  height: 30px;
  ${(p) => p.$pressed && css`
    background: #dcdee0;
    border: 1px solid #b4b9bb;
  `}
`;

const Page = styled.div`
  display: flex;
  flex-direction: column;
  height: 100vh;
  overflow: hidden;
`;

/* ---------- title bar ---------- */

const TitleBar = styled.header`
  display: grid;
  grid-template-columns: 1fr auto 1fr;
  align-items: center;
  height: 35px;
  background: #fcfcfc;
`;

const QuickAccess = styled.div`
  display: flex;
  align-items: center;
`;

const Brand = styled.div`
  display: flex;
  align-items: center;
  gap: 5px;
  width: 105px;
  padding-left: 10px;
  font: 24px/28px Lato, sans-serif;
  color: #555;
`;

const BrandName = styled.span`
  display: flex;
  height: 32px;
`;

const BrandDot = styled.small`
  font-size: 9px;
  line-height: 24px;
`;

const AppTitle = styled.h1`
  margin: 0;
  font-size: 16px;
  font-weight: 400;
`;

const WindowButtons = styled.div`
  display: flex;
  justify-content: flex-end;
  padding-right: 4px;
`;

const Divider = styled.i<{ $h: number; $m?: number }>`
  flex: none;
  width: 1px;
  height: ${(p) => p.$h}px;
  margin: 0 ${(p) => p.$m || 0}px;
  background: #ccd3d5;
`;

/* ---------- tab bar ---------- */

const TabBar = styled.nav`
  display: flex;
  height: 34px;
  background: ${color.dark};
`;

const Tab = styled.button<{ $kind?: 'file' | 'active' }>`
  padding: 0 30px;
  font-size: 15px;
  line-height: 34px;
  color: #f2f2f2;
  ${(p) => p.$kind === 'file' && css`
    padding: 0 25px;
    color: #fff;
    background: linear-gradient(160deg, #66d141, #4ca532);
  `}
  ${(p) => p.$kind === 'active' && css`
    color: #3f8f2b;
    background: #fff;
  `}
`;

const TabTools = styled.div`
  display: flex;
  align-items: center;
  margin-left: auto;
`;

const HelpButton = styled(IconButton)`
  font-size: 17px;
  font-weight: 700;
  color: #fff;
`;

/* ---------- ribbon ---------- */

const Ribbon = styled.section`
  display: flex;
  flex: none;
  height: 134px;
  border-bottom: 2px solid ${color.line};
`;

const GroupBox = styled.div<{ $w: number }>`
  display: flex;
  flex: none;
  flex-direction: column;
  width: ${(p) => p.$w}px;
  margin: 2px 0 4px;
  border-right: 1px solid #c3ccce;
`;

const GroupBody = styled.div<{ $pad: number }>`
  display: flex;
  height: 99px;
  padding-left: ${(p) => p.$pad}px;
`;

const GroupLabel = styled.button`
  display: flex;
  flex: 1;
  align-items: center;
  justify-content: center;
  gap: 5px;
  padding-top: 5px;
`;

const Column = styled.div<{ $w?: number }>`
  display: grid;
  flex: none;
  grid-auto-rows: 33px;
  width: ${(p) => (p.$w ? `${p.$w}px` : 'auto')};
  padding-left: 2px;
  margin-top: -1px;
`;

const ItemButton = styled.button<{ $off?: boolean }>`
  display: flex;
  align-items: center;
  gap: 5px;
  white-space: nowrap;
  color: ${(p) => (p.$off ? color.muted : color.text)};
`;

const ItemCaret = styled(Caret)`
  margin-left: 4px;
`;

const BigButton = styled.button<{ $w: number }>`
  display: flex;
  flex: none;
  flex-direction: column;
  align-items: center;
  width: ${(p) => p.$w}px;
  padding-top: 5px;
  line-height: 19px;
  white-space: pre-line;
`;

const BigLabel = styled.span`
  margin-top: 11px;
`;

const BigCaret = styled(Caret)`
  margin-top: 7px;
`;

type Item = { icon: string; label: string; caret?: boolean; off?: boolean; hideLabel?: boolean };

const Items = ({ w, items }: { w?: number; items: Item[] }) => (
  <Column $w={w}>
    {items.map((it) => (
      <ItemButton key={it.label} $off={it.off} aria-label={it.label}>
        <Icon name={it.icon} />
        {!it.hideLabel && it.label}
        {it.caret && <ItemCaret $color={it.off ? '#aaa' : undefined} />}
      </ItemButton>
    ))}
  </Column>
);

const Big = ({ w, icon, label, caret }: { w: number; icon: string; label: string; caret?: boolean }) => (
  <BigButton $w={w}>
    <Icon name={icon} size={40} />
    <BigLabel>{label}</BigLabel>
    {caret && <BigCaret />}
  </BigButton>
);

const Group = ({ w, label, pad = 0, children }: { w: number; label: string; pad?: number; children: ReactNode }) => (
  <GroupBox $w={w}>
    <GroupBody $pad={pad}>{children}</GroupBody>
    <GroupLabel>{label}<Caret /></GroupLabel>
  </GroupBox>
);

/* ---------- model tree panel ---------- */

const Workspace = styled.main`
  display: flex;
  flex: 1;
  min-height: 0;
`;

const Panel = styled.aside`
  display: flex;
  flex: none;
  flex-direction: column;
  width: 438px;
  background: #fff;
  border-right: 1px solid #dde2e4;
`;

const PanelTabs = styled.div`
  display: flex;
  height: 32px;
  background: ${color.strip};
`;

const PanelTab = styled.button<{ $w: number; $active?: boolean }>`
  display: flex;
  align-items: center;
  justify-content: center;
  width: ${(p) => p.$w}px;
  padding-left: ${(p) => (p.$active ? 3 : 0)}px;
  background: ${(p) => (p.$active ? '#fff' : 'none')};
`;

const PanelTools = styled.div`
  display: flex;
  align-items: center;
  height: 40px;
  padding-left: 8px;
`;

const Grip = styled.i`
  width: 6px;
  height: 18px;
  margin-right: 18px;
  border-left: 3px dotted #b5b5b5;
`;

const Gap = styled.i`
  width: 6px;
`;

const FilterRow = styled.form`
  display: flex;
  align-items: center;
  height: 34px;
  padding: 0 7px 0 15px;
`;

const FilterField = styled.label`
  display: flex;
  flex: 1;
  align-items: center;
  height: 34px;
  margin-left: 5px;
  border: 1px solid #b3c4c7;
`;

const FilterInput = styled.input`
  flex: 1;
  min-width: 0;
  height: 30px;
  padding: 0 8px;
  border: 0;
  outline: 0;
`;

const Tree = styled.ul`
  display: grid;
  grid-auto-rows: 1fr;
  height: 225px;
  margin: 6px 0 0;
  padding: 0 0 0 15px;
  list-style: none;
`;

const TreeRow = styled.li<{ $dim?: boolean }>`
  display: flex;
  align-items: center;
  gap: 5px;
  color: ${(p) => (p.$dim ? '#c6bca5' : color.text)};
`;

const Expander = styled.span`
  width: 20px;
`;

const InsertLine = styled.div`
  display: flex;
  align-items: center;
  justify-content: space-between;
  height: 2px;
  margin: 8px 6px 0 14px;
  background: #5ec54a;
`;

const InsertCap = styled.i<{ $end?: boolean }>`
  border: 4px solid transparent;
  ${(p) => (p.$end ? 'border-right-color: #5ec54a; border-left: 0;' : 'border-left-color: #5ec54a; border-right: 0;')}
`;

const treeRows = [
  { icon: 'design', label: 'Design Items', open: true },
  { icon: 'csysGrey', label: 'DEFAULT_CSYS', dim: true },
  { icon: 'planeGrey', label: 'RIGHT', dim: true },
  { icon: 'planeGrey', label: 'TOP', dim: true },
  { icon: 'planeGrey', label: 'FRONT', dim: true },
  { icon: 'extrudeSmall', label: 'Extrude 1', open: true },
  { icon: 'extrudeSmall', label: 'Extrude 2', open: true },
  { icon: 'extrudeSmall', label: 'Extrude 3', open: true },
  { icon: 'udf', label: 'Group TEST_PAD', open: true },
];

/* ---------- graphics window ---------- */

const Viewport = styled.section`
  position: relative;
  flex: 1;
  min-width: 0;
  padding-top: 8px;
  background: ${color.canvas};
`;

const ViewTools = styled.div`
  position: relative;
  z-index: 1;
  display: flex;
  align-items: center;
  justify-content: space-between;
  width: 528px;
  height: 40px;
  margin: 0 auto;
  padding: 0 5px;
  background: #fff;
  border: 1px solid #b9c8ca;
`;

const Scene = styled.svg`
  position: absolute;
  inset: 0;
  width: 100%;
  height: 100%;
`;

const Pointer = styled.svg`
  position: absolute;
  left: 530px;
  top: 748px;
  width: 12px;
  height: 20px;
`;

const FlexPart = () => (
  <Scene viewBox="438 203 1482 835" role="img" aria-label="Flexible part">
    <defs>
      <linearGradient id="plateSide" gradientUnits="userSpaceOnUse" x1="72" x2="660" y1="0" y2="0">
        <stop offset="0" stopColor="#5a4600" /><stop offset=".28" stopColor="#574400" /><stop offset=".38" stopColor="#7d6400" />
        <stop offset=".5" stopColor="#937700" /><stop offset=".78" stopColor="#937700" /><stop offset=".9" stopColor="#584500" />
      </linearGradient>
      <linearGradient id="plateRight" gradientUnits="userSpaceOnUse" x1="720" x2="944" y1="0" y2="0">
        <stop offset="0" stopColor="#786000" /><stop offset=".2" stopColor="#937700" /><stop offset=".75" stopColor="#937700" /><stop offset="1" stopColor="#695400" />
      </linearGradient>
      <linearGradient id="strap" gradientUnits="userSpaceOnUse" x1="980" y1="420" x2="1240" y2="1580">
        <stop offset=".01" stopColor="#b09100" /><stop offset=".08" stopColor="#c29f00" /><stop offset=".14" stopColor="#cfab0a" /><stop offset=".18" stopColor="#c8a404" />
        <stop offset=".25" stopColor="#ac8c00" /><stop offset=".32" stopColor="#937700" /><stop offset=".65" stopColor="#937700" />
        <stop offset=".72" stopColor="#b39300" /><stop offset=".79" stopColor="#cca808" /><stop offset=".85" stopColor="#cfab0a" /><stop offset=".95" stopColor="#a98900" />
      </linearGradient>
      <linearGradient id="padTop" gradientUnits="userSpaceOnUse" x1="1380" y1="1120" x2="1400" y2="1190">
        <stop offset="0" stopColor="#927600" /><stop offset="1" stopColor="#b09100" />
      </linearGradient>
    </defs>
    <g transform="translate(860 280) scale(.33333)">
      <path d="M72 215V296Q76 303 90 313L238 416Q285 450 375 433L520 397Q575 387 608 410L660 390V330L400 240Z" fill="url(#plateSide)" />
      <path d="M943 200V275Q940 291 900 303L778 336 715 292 760 250Z" fill="url(#plateRight)" />
      <path d="M711 470C790 540 850 640 852 790V1280C855 1440 930 1570 1005 1578Q1040 1578 1065 1530L1132 1357 1200 1205Q1215 1165 1260 1162L1500 1200 1445 1320 1360 1520Q1340 1580 1300 1590L1055 1651Q1030 1658 1005 1655C920 1640 812 1450 812 1270V790C810 670 768 588 711 546Z" fill="#584500" />
      <path d="M711 470L752 461 925 418 968 409C1060 500 1111 620 1111 740V1225Q1111 1290 1133 1357L1065 1530Q1040 1578 1005 1578C930 1570 852 1440 852 1280V790C848 640 790 540 711 470Z" fill="url(#strap)" />
      <path d="M1230 1277L1357 1243 1445 1320 1360 1520Q1340 1580 1300 1590L1055 1651Q1080 1640 1095 1598L1200 1300Z" fill="#524100" />
      <path d="M1095 1598L1350 1537Q1335 1580 1298 1591L1050 1652Q1080 1632 1095 1598Z" fill="#453800" />
      <path d="M1228 1280Q1250 1238 1285 1242L1312 1251 1360 1243Z" fill="#463900" />
      <path d="M72 218Q74 197 110 185L640 58Q720 42 778 74L925 178Q962 205 918 230 905 236 880 243L745 272Q712 282 722 296L778 335Q760 345 768 350 775 358 795 354L868 338 917 374 878 384 925 418 930 425 760 468 703 427 660 435 608 403 650 387 648 367 600 333Q580 317 530 323L370 360Q285 375 238 346L100 250Q76 236 72 218Z" fill="#b09100" />
      <path d="M648 367Q690 364 684 378 675 389 648 387Z" fill="#6d5700" />
      <path d="M608 403L660 435V507L608 474Z" fill="#584500" />
      <path d="M660 435L703 427V498L660 507Z" fill="#937700" />
      <path d="M703 427L752 461 711 470V500L703 498Z" fill="#5c4800" />
      <path d="M878 384L917 374V413L924 418Z" fill="#8c7100" />
      <path d="M766 342L778 336V352Q764 350 766 342Z" fill="#6d5700" />
      <path d="M1255 1162L1500 1102Q1540 1094 1572 1118L1530 1128 1575 1163 1625 1154 1674 1188 1415 1250 1366 1217 1405 1207 1357 1172 1312 1181Q1290 1162 1255 1162Z" fill="url(#padTop)" />
      <path d="M1312 1181L1357 1172V1243L1312 1252Z" fill="#937700" />
      <path d="M1357 1172L1405 1207 1366 1217 1357 1243Z" fill="#594600" />
      <path d="M1366 1217L1415 1250V1323L1357 1283V1243Z" fill="#513f00" />
      <path d="M1415 1250L1674 1188V1262L1415 1323Z" fill="#937700" />
      <path d="M1530 1128L1572 1118V1161Z" fill="#8c7100" />
      <path d="M961 1021V952" stroke="#33ee33" strokeWidth="4" />
      <path d="M961 1021L898 1035" stroke="#33dddd" strokeWidth="4" />
      <path d="M961 1021L1000 1046" stroke="#dd3333" strokeWidth="4" />
      <path d="M953 944h16v16h-16z" fill="#33ff33" />
      <path d="M888 1025h20v20h-20z" fill="#33ffff" />
      <path d="M988 1034h24v24h-24z" fill="#ff3333" />
    </g>
  </Scene>
);

/* ---------- status bar ---------- */

const StatusBar = styled.footer`
  display: flex;
  flex: none;
  align-items: center;
  height: 43px;
  padding: 0 23px 0 8px;
  border-top: 2px solid ${color.line};
  border-bottom: 1px solid #ececec;
`;

const StatusGroup = styled.div`
  display: flex;
  align-items: center;
  gap: 3px;
`;

const StatusRight = styled(StatusGroup)`
  margin-left: auto;
`;

const FindBox = styled.div`
  display: flex;
  border: 1px solid #bcc4c6;
  background: #fafafa;
`;

const FindMenu = styled(IconButton)`
  height: 28px;
  border-left: 1px solid #bcc4c6;
`;

const FindButton = styled(IconButton)`
  height: 28px;
`;

const SelectBox = styled.label`
  position: relative;
  display: flex;
  width: 206px;
  height: 29px;
  margin-left: 110px;
  border: 1px solid #b3bbbd;
  background: #f7f7f7;
`;

const FilterSelect = styled.select`
  flex: 1;
  padding: 0 28px 0 9px;
  border: 0;
  outline: 0;
  appearance: none;
  background: none;
`;

const SelectArrow = styled.span`
  position: absolute;
  top: 0;
  right: 0;
  display: flex;
  align-items: center;
  justify-content: center;
  width: 19px;
  height: 27px;
  border-left: 1px solid #b3bbbd;
  pointer-events: none;
`;

const tabs = ['Analysis', 'Live Simulation', 'Annotate', 'Tools', 'View', 'Flexible Modeling', 'Applications'];

const viewTools = ['zoomFit', 'zoomIn', 'zoomOut', 'repaint', 'shading', 'saved', 'orient', 'viewMgr', 'perspective', 'section', 'datum', 'annot', 'spin', 'analysis', 'pause', 'stop'];

export default function App() {
  return (
    <Page>
      <GlobalStyle />
      <Gradients />
      <TitleBar>
        <QuickAccess>
          <Brand><Icon name="logo" /><BrandName>creo<BrandDot>•</BrandDot></BrandName></Brand>
          <IconButton aria-label="New"><Icon name="fresh" /></IconButton>
          <IconButton aria-label="Open"><Icon name="open" /></IconButton>
          <IconButton aria-label="Save"><Icon name="save" /></IconButton>
          <IconButton aria-label="Undo"><Icon name="undo" /></IconButton>
          <IconButton $w={16} aria-label="Undo list"><Caret $color="#aaa" /></IconButton>
          <IconButton aria-label="Redo"><Icon name="redo" /></IconButton>
          <IconButton $w={16} aria-label="Redo list"><Caret $color="#aaa" /></IconButton>
          <IconButton aria-label="Regenerate"><Icon name="regenList" /></IconButton>
          <IconButton aria-label="Windows"><Icon name="windows" /></IconButton>
          <IconButton $w={20} aria-label="Window list"><Caret /></IconButton>
          <IconButton aria-label="Close window"><Icon name="closeWin" /></IconButton>
          <Divider $h={30} />
          <IconButton aria-label="Customize"><Icon name="overflow" /></IconButton>
        </QuickAccess>
        <AppTitle>ADDING_FLEX (Active) - Creo Parametric</AppTitle>
        <WindowButtons>
          <IconButton $w={34} aria-label="Minimize"><Icon name="min" /></IconButton>
          <IconButton $w={34} aria-label="Restore"><Icon name="restore" /></IconButton>
          <IconButton $w={34} aria-label="Close"><Icon name="close" /></IconButton>
        </WindowButtons>
      </TitleBar>

      <TabBar>
        <Tab $kind="file">File</Tab>
        <Tab $kind="active">Model</Tab>
        {tabs.map((t) => <Tab key={t}>{t}</Tab>)}
        <TabTools>
          <IconButton aria-label="Collapse ribbon"><Icon name="collapse" /></IconButton>
          <IconButton aria-label="Search"><Icon name="search" /></IconButton>
          <IconButton aria-label="Learning"><Icon name="grad" /></IconButton>
          <IconButton $w={16} aria-label="Learning menu"><Caret $color="#fff" /></IconButton>
          <HelpButton>?</HelpButton>
        </TabTools>
      </TabBar>

      <Ribbon>
        <Group w={140} label="Operations">
          <Big w={90} icon="regenerate" label="Regenerate" caret />
          <Items items={[
            { icon: 'copy', label: 'Copy', off: true, hideLabel: true },
            { icon: 'paste', label: 'Paste', off: true, hideLabel: true, caret: true },
            { icon: 'del', label: 'Delete', off: true, hideLabel: true, caret: true },
          ]} />
        </Group>
        <Group w={183} label="Get Data" pad={7}>
          <Items items={[{ icon: 'udf', label: 'User-Defined Feature' }, { icon: 'copyGeom', label: 'Copy Geometry' }, { icon: 'shrink', label: 'Shrinkwrap' }]} />
        </Group>
        <Group w={173} label="Body" pad={6}>
          <Items items={[{ icon: 'boolOp', label: 'Boolean Operations' }, { icon: 'splitBody', label: 'Split Body' }, { icon: 'newBody', label: 'New Body' }]} />
        </Group>
        <Group w={273} label="Datum">
          <Big w={57} icon="plane" label="Plane" />
          <Items w={154} items={[{ icon: 'axis', label: 'Axis' }, { icon: 'point', label: 'Point', caret: true }, { icon: 'csys', label: 'Coordinate System' }]} />
          <Big w={60} icon="sketch" label="Sketch" />
        </Group>
        <Group w={185} label="Shapes">
          <Big w={66} icon="extrude" label="Extrude" />
          <Items items={[{ icon: 'revolve', label: 'Revolve' }, { icon: 'sweep', label: 'Sweep', caret: true }, { icon: 'swept', label: 'Swept Blend' }]} />
        </Group>
        <Group w={204} label="Engineering" pad={7}>
          <Items w={109} items={[{ icon: 'hole', label: 'Hole' }, { icon: 'round', label: 'Round', caret: true }, { icon: 'chamfer', label: 'Chamfer', caret: true }]} />
          <Items items={[{ icon: 'draft', label: 'Draft', caret: true }, { icon: 'shell', label: 'Shell' }, { icon: 'rib', label: 'Rib', caret: true }]} />
        </Group>
        <Group w={450} label="Editing">
          <Big w={64} icon="pattern" label="Pattern" caret />
          <Items w={77} items={[{ icon: 'mirror', label: 'Mirror', off: true }, { icon: 'trim', label: 'Trim' }, { icon: 'merge', label: 'Merge', off: true }]} />
          <Items w={91} items={[{ icon: 'extend', label: 'Extend', off: true }, { icon: 'offset', label: 'Offset' }, { icon: 'intersect', label: 'Intersect' }]} />
          <Items w={87} items={[{ icon: 'project', label: 'Project' }, { icon: 'thicken', label: 'Thicken', off: true }, { icon: 'solidify', label: 'Solidify' }]} />
          <Items items={[{ icon: 'remove', label: 'Remove' }, { icon: 'split', label: 'Split', caret: true }, { icon: 'unify', label: 'Unify Surfaces' }]} />
        </Group>
        <Group w={175} label="Surfaces">
          <Big w={80} icon="boundary" label={'Boundary\nBlend'} />
          <Items items={[{ icon: 'fill', label: 'Fill' }, { icon: 'style', label: 'Style' }, { icon: 'freestyle', label: 'Freestyle' }]} />
        </Group>
        <Group w={112} label="Model Intent">
          <Big w={110} icon="component" label={'Component\nInterface'} />
        </Group>
      </Ribbon>

      <Workspace>
        <Panel>
          <PanelTabs>
            <PanelTab $w={40} $active aria-label="Model Tree"><Icon name="treeTab" /></PanelTab>
            <PanelTab $w={38} aria-label="Folder Browser"><Icon name="folders" /></PanelTab>
            <PanelTab $w={42} aria-label="Favorites"><Icon name="favorites" /></PanelTab>
          </PanelTabs>
          <PanelTools>
            <IconButton aria-label="Active model"><Icon name="green" /></IconButton>
            <Grip />
            <IconButton aria-label="Expand all"><Icon name="expand" /></IconButton>
            <IconButton $w={29} aria-label="Collapse all"><Icon name="collapseAll" /></IconButton>
            <IconButton $pressed aria-label="Show columns"><Icon name="columns" /></IconButton>
            <Divider $h={30} $m={5} />
            <IconButton aria-label="New folder"><Icon name="newFolder" /></IconButton>
            <Divider $h={30} $m={5} />
            <IconButton aria-label="Tree filters"><Icon name="treeFilter" /></IconButton>
            <IconButton aria-label="Tree columns"><Icon name="treeCols" /></IconButton>
            <Divider $h={30} $m={5} />
            <IconButton aria-label="Design items"><Icon name="design" /></IconButton>
            <IconButton aria-label="Layers"><Icon name="layers" /></IconButton>
            <IconButton aria-label="Selection"><Icon name="select" /></IconButton>
            <IconButton aria-label="Body tree"><Icon name="treeBody" /></IconButton>
            <Gap />
            <IconButton aria-label="Report"><Icon name="report" /></IconButton>
          </PanelTools>
          <FilterRow>
            <Icon name="funnel" />
            <FilterField>
              <FilterInput aria-label="Filter tree" />
              <IconButton $w={24} type="button" aria-label="Clear filter"><Icon name="cross" /></IconButton>
            </FilterField>
            <IconButton $w={24} type="button" aria-label="Filter options"><Caret /></IconButton>
            <IconButton $w={28} type="button" aria-label="Add filter"><Icon name="plus" /></IconButton>
          </FilterRow>
          <Tree>
            <TreeRow><Icon name="part" />ADDING_FLEX.PRT</TreeRow>
            {treeRows.map((r) => (
              <TreeRow key={r.label} $dim={r.dim}>
                <Expander>{r.open && <Icon name="arrow" />}</Expander>
                <Icon name={r.icon} />
                {r.label}
              </TreeRow>
            ))}
          </Tree>
          <InsertLine><InsertCap /><InsertCap $end /></InsertLine>
        </Panel>
        <Viewport>
          <ViewTools>
            {viewTools.map((n) => (
              <IconButton key={n} $w={29} $pressed={n === 'annot' || n === 'spin'} aria-label={n}><Icon name={n} /></IconButton>
            ))}
          </ViewTools>
          <FlexPart />
          <Pointer viewBox="0 0 12 20" aria-hidden="true">
            <path d="M1 1v15l3-3 3 6 2-1-2-6h4z" fill="#fff" stroke="#222" />
          </Pointer>
        </Viewport>
      </Workspace>

      <StatusBar>
        <StatusGroup>
          <IconButton $w={27} $pressed aria-label="Toggle navigator"><Icon name="navPanel" /></IconButton>
          <IconButton aria-label="Browser"><Icon name="globe" /></IconButton>
          <IconButton aria-label="Full screen"><Icon name="page" /></IconButton>
          <Divider $h={30} $m={5} />
        </StatusGroup>
        <StatusRight>
          <Divider $h={32} />
          <Divider $h={32} />
          <FindBox>
            <FindButton $w={33} aria-label="Find"><Icon name="find" /></FindButton>
            <FindMenu $w={18} aria-label="Find options"><Caret /></FindMenu>
          </FindBox>
          <Divider $h={32} />
          <SelectBox>
            <FilterSelect aria-label="Selection filter"><option>Geometry</option></FilterSelect>
            <SelectArrow><Caret /></SelectArrow>
          </SelectBox>
        </StatusRight>
      </StatusBar>
    </Page>
  );
}
